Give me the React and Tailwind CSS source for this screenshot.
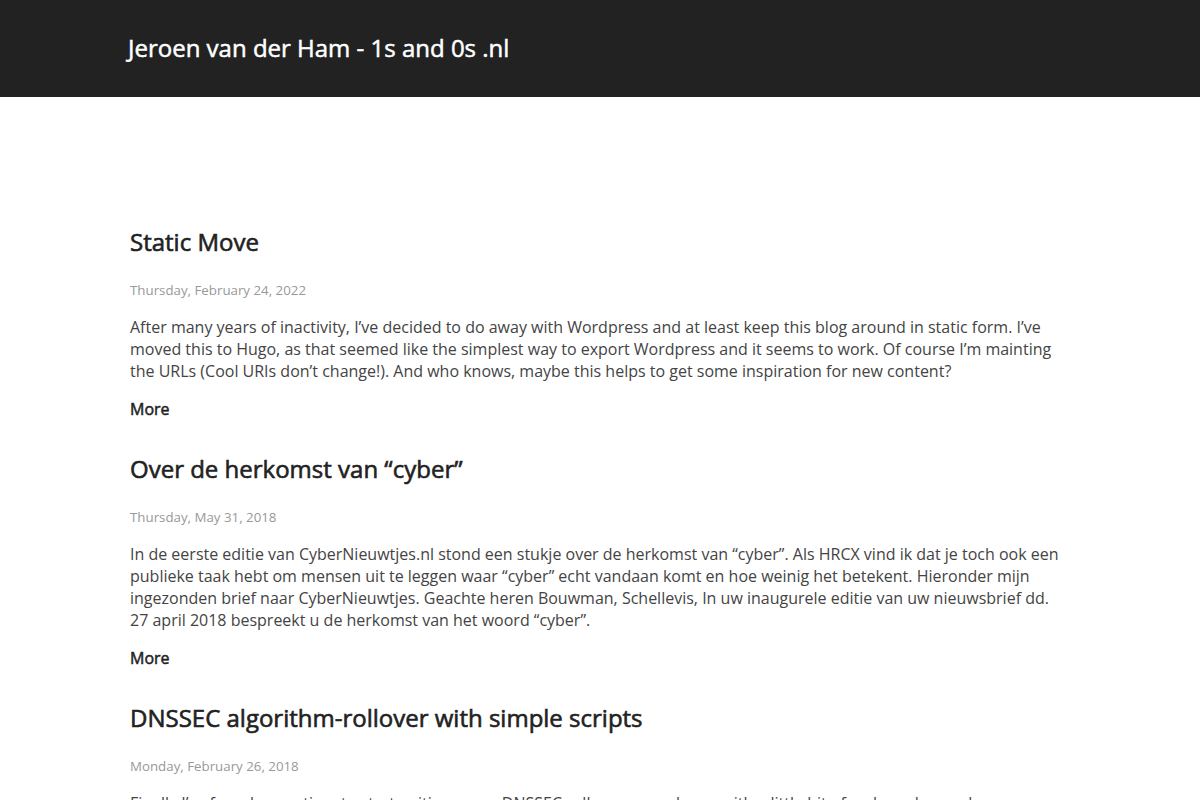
const posts = [
  {
    title: "Static Move",
    date: "Thursday, February 24, 2022",
    summary:
      "After many years of inactivity, I’ve decided to do away with Wordpress and at least keep this blog around in static form. I’ve moved this to Hugo, as that seemed like the simplest way to export Wordpress and it seems to work. Of course I’m mainting the URLs (Cool URIs don’t change!). And who knows, maybe this helps to get some inspiration for new content?",
  },
  {
    title: "Over de herkomst van “cyber”",
    date: "Thursday, May 31, 2018",
    summary:
      "In de eerste editie van CyberNieuwtjes.nl stond een stukje over de herkomst van “cyber”. Als HRCX vind ik dat je toch ook een publieke taak hebt om mensen uit te leggen waar “cyber” echt vandaan komt en hoe weinig het betekent. Hieronder mijn ingezonden brief naar CyberNieuwtjes. Geachte heren Bouwman, Schellevis, In uw inaugurele editie van uw nieuwsbrief dd. 27 april 2018 bespreekt u de herkomst van het woord “cyber”.",
  },
  {
    title: "DNSSEC algorithm-rollover with simple scripts",
    date: "Monday, February 26, 2018",
    summary:
      "Finally I’ve found some time to start writing up on DNSSEC rollover procedures, with a little bit of code and some lessons learned while finding out how to do an algorithm-rollover without breaking anything for the resolvers out there.",
  },
];

function Post({ title, date, summary }) {
  return (
    <article className="mb-[36px]">
      <h2 className="text-[24px] leading-[26px] text-[#222222] [-webkit-text-stroke:0.6px_#222222]">
        <a href="#">{title}</a>
      </h2>
      <div className="mt-[26px] text-[13.3px] leading-[18px] text-[#999999]">{date}</div>
      <p className="mt-[17px] text-[16px] leading-[22px] text-[#444444]">{summary}</p>
      <a
        href="#"
        className="block mt-[16px] text-[16px] leading-[22px] text-[#222222] [-webkit-text-stroke:0.5px_#222222]"
      >
        More
      </a>
    </article>
  );
}

export default function App() {
  return (
    <div className="min-h-screen bg-white" style={{ fontFamily: '"Open Sans", "Noto Sans", sans-serif' }}>
      <header className="bg-[#222222] h-[97px] flex items-center">
        <div className="w-[940px] mx-auto">
          <a
            href="#"
            className="text-[24px] leading-[30px] text-white -ml-[2px] block -mt-[2px] [-webkit-text-stroke:0.5px_#ffffff]"
          >
            Jeroen van der Ham - 1s and 0s .nl
          </a>
        </div>
      </header>
      <main className="w-[940px] mx-auto pt-[132px]">
        {posts.map((p) => (
          <Post key={p.title} {...p} />
        ))}
      </main>
    </div>
  );
}
